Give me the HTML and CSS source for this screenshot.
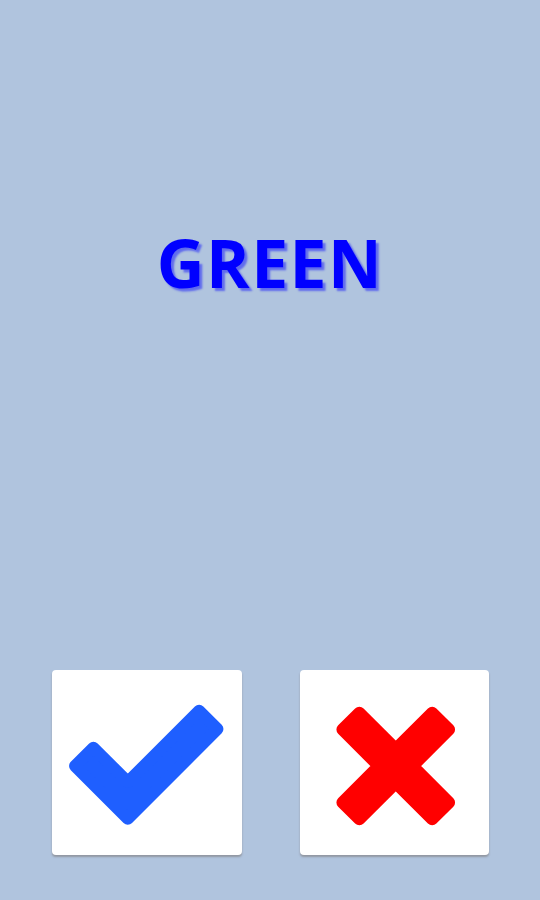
FILE: index.html
```html
<!DOCTYPE html>
<html lang="en">
<head>
    <meta charset="UTF-8">
    <meta name="viewport" content="width=device-width, initial-scale=1.0">
    <title>Color Match</title>
    <link rel="stylesheet" href="styles.css">
</head>
<body>
    <div class="screen">
        <!-- Palavra mostrada -->
        <h1 class="word">GREEN</h1>

        <!-- Respostas -->
        <div class="answers">
            <button type="button" class="answer" aria-label="Yes">
                <svg viewBox="0 0 190 185" width="190" height="185">
                    <polygon class="check" points="41.5,77.6 23.1,96 76,148.9 165.9,59 147.5,40.6 76,112.1"/>
                </svg>
            </button>
            <button type="button" class="answer" aria-label="No">
                <svg viewBox="0 0 190 185" width="190" height="185">
                    <polygon class="cross" points="149.5,132.5 132.5,149.5 96,113 59.5,149.5 42.5,132.5 79,96 42.5,59.5 59.5,42.5 96,79 132.5,42.5 149.5,59.5 113,96"/>
                </svg>
            </button>
        </div>
    </div>
</body>
</html>
```

FILE: styles.css
```css
/* Geral */
body {
    margin: 0;
    background-color: #b0c4de;
    font-family: "Open Sans", "Liberation Sans", sans-serif;
}

.screen {
    display: flex;
    flex-direction: column;
    height: 100vh;
}

/* Palavra */
.word {
    margin: 222px 0 0;
    font-size: 66px;
    line-height: 80px;
    font-weight: 700;
    letter-spacing: 1.5px;
    text-align: center;
    color: #0000ff;
    text-shadow: 3px 3px 2px rgba(0, 0, 255, 0.45);
}

/* Botões */
.answers {
    display: flex;
    gap: 58px;
    margin-top: auto;
    padding: 0 51px 45px 52px;
}

.answer {
    flex: 1;
    height: 185px;
    padding: 0;
    border: none;
    border-radius: 4px;
    background-color: #fff;
    box-shadow: 0 2px 2px rgba(90, 70, 50, 0.35);
    cursor: pointer;
}

.answer svg {
    display: block;
    width: 100%;
    height: 100%;
}

.check {
    fill: #1f5fff;
    stroke: #1f5fff;
    stroke-width: 12;
    stroke-linejoin: round;
}

.cross {
    fill: #ff0000;
    stroke: #ff0000;
    stroke-width: 12;
    stroke-linejoin: round;
}
```
